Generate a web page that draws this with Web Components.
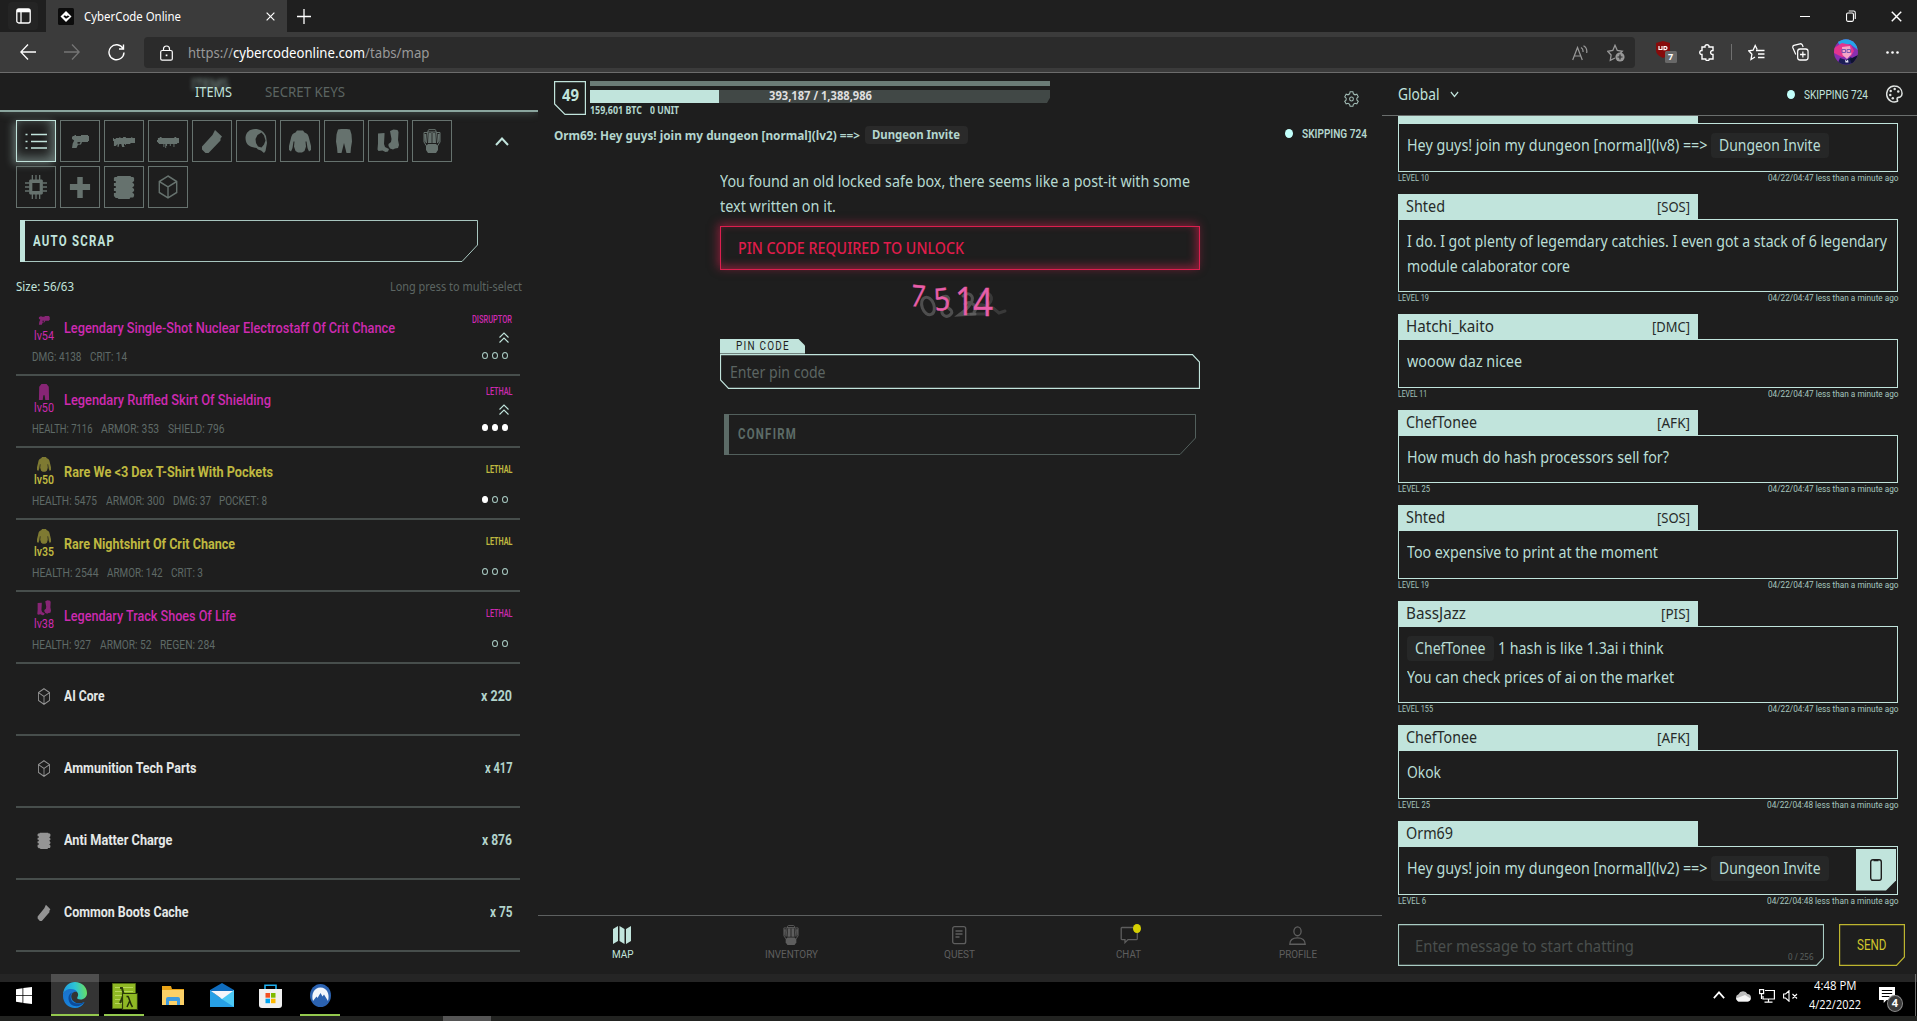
<!DOCTYPE html>
<html lang="en">
<head>
<meta charset="utf-8">
<title>CyberCode Online</title>
<style>
html,body{margin:0;padding:0;background:#1e1e1e;overflow:hidden}
body{width:1917px;height:1021px;font-family:"Noto Sans","Open Sans",sans-serif;font-size:16px;color:#c1e4dc}
</style>
</head>
<body>
<cyber-app></cyber-app>
<script>
const TECH = 'Roboto,"Liberation Sans",sans-serif';
const t = (text, w, cls = '') => `<fit-text w="${w}" class="${cls}">${text}</fit-text>`;
const ic = (name, w, h = w, style = '') => `<ui-icon name="${name}" w="${w}" h="${h}" style="${style}"></ui-icon>`;

const S = 'fill="none" stroke="currentColor"';
const ICONS = {
  list: ['0 0 22 18', `<g ${S} stroke-width="1.6"><path d="M6 2.5h16M6 9.5h16M6 16h16"/><path d="M.5 2.5h2M.5 9.5h2M.5 16h2"/></g>`],
  pistol: ['0 0 22 24', `<path fill="currentColor" fill-rule="evenodd" d="M4 7h1.500V6H7v1h5V6h7v1h1v5h-1v1h-6l-1 2.500-3 .3L7.500 19H3l.7-4.500 1.500-3L3 10V8zm4.500 6v1.800h2.200l.8-1.800z"/>`],
  rifle: ['0 0 24 24', `<path fill="currentColor" d="M0 9h1v1h2V9h4V8h1v1h3V8h3v1h6V8h1v1h3v5h-5v1h-5v1h-1v-1h-1v2l1 1h-3l-1-3h-2l-1 3H5v-3l-2 2H1v-5H0z"/>`],
  smg: ['0 0 24 24', `<path fill="currentColor" d="M1 9h2V8h2v1h14V8h2v1h3v5h-2v1h-3v3h-1v-3h-3v2h-1v-2h-3v2h-1v2h-1v-4H8v3H7v-3H2v-1H1v-1H0v-2h1z"/>`],
  clip: ['0 0 22 24', `<path fill="currentColor" d="M14 1l7 6.500-1.500 2v2L9 22.500 7.500 24H4.500L1 20.500v-3L11.500 6z"/>`],
  helmet: ['0 0 22 24', `<path fill="currentColor" fill-rule="evenodd" d="M10 0c5 0 9 2.500 11 7l1 7-1.500 8-1.500 2-3-2.500-3-1-1.500-1.500-4.500-1C3 17 .5 14 .5 8.500 1 3.500 4.500 0 10 0zm6.500 3.500l-4 2.500-2 4 .5 4 2 3.500 3.500 1 2.500-3 1.500-4-1.500-5z"/>`],
  shirt: ['0 0 22 24', `<path fill="currentColor" d="M8 1.500h6l1.500 2c2.500.5 4 2.500 4.500 5.500l2 8v4l-2 1.500-1.500-3.500-1-6.500h-1l.5 5-1.500 4.500L13 23.500H9L6.500 22 5 17.500l.500-5h-1l-1 6.500L2 22.500 0 21v-4l2-8c.5-3 2-5 4.500-5.500z"/>`],
  pants: ['0 0 22 24', `<path fill="currentColor" d="M5 .5Q11-.8 17 .5l1.500 5 .5 7-1 6-.5 5.500h-4l-1.500-6-1-4-1 4-1.500 6h-4L4 18.500l-1-6 .5-7z"/>`],
  skirt: ['0 0 22 24', `<path fill="currentColor" d="M7 0h8l3.500 4 .5 20h-6l-1-7h-2l-1 7H3l.5-20z"/>`],
  boots: ['0 0 22 24', `<path fill="currentColor" d="M1 4.500l6.500-.500v2L7 15l1 3 4 2-1 2.500-2.500.5-3-1.500-4 .5-1-1.500.5-6zM13 2l3.500-1.500 4 .5 1 2-.5 8 1 5-1 3-3 .5-2 1-3-1-1.500-2.500V15l2.500-2 .5-3z"/>`],
  pack: ['0 0 18 24', `<g ${S} stroke-width="1"><path d="M5 3V1.500L6 .6h6l1 .9V3M4.500 3L3.500 14M13.500 3l1 11M4 3.500H1V13l2.500 4M14 3.500h3V13l-2.500 4M4.500 3h9M9 3v11"/></g><g fill="currentColor"><path d="M5.500 4h2.700v10H5zM9.800 4h2.700l.5 10H9.800zM1.200 5h2l-.5 9-1.200-2zM14.800 5h2l-.3 7-1.200 2z"/><path d="M5 15h8l2 2v4l-2 3H5l-2-3v-4z"/></g>`],
  chip: ['0 0 24 24', `<path fill="currentColor" fill-rule="evenodd" d="M5.500 4.500h13l1 1v13l-1 1h-13l-1-1v-13zM8 8v8h8V8z"/><g ${S} stroke-width="1.400"><path d="M8 0v5M12 0v5M16 0v5M8 19v5M12 19v5M16 19v5M0 8h5M0 12h5M0 16h5M19 8h5M19 12h5M19 16h5"/></g>`],
  plus: ['0 0 24 24', `<path fill="currentColor" d="M9 2h6v7h8v6h-8v8H9v-8H1V9h8z"/>`],
  module: ['0 0 24 24', `<path fill="currentColor" d="M5 1h14l1 1h2l1 1v3l-2 1.500L23 9v2l-2 1.500 2 1.500v2l-2 1.500 2 1.500v2l-1 1.500h-3L18 24H6l-1-1H3l-2-2v-3h2v-2H1v-3h2v-2H1V8h2V6H1V3l1-1h2z"/>`],
  cube: ['0 0 24 24', `<g ${S} stroke-width="1.500"><path d="M12 1l9.500 5.500v11L12 23l-9.500-5.500v-11zM2.500 6.500L12 12l9.500-5.500M12 12v11"/></g>`],
  up: ['0 0 14 9', `<path ${S} stroke-width="2" d="M1 8l6-6.500L13 8"/>`],
  down: ['0 0 10 7', `<path ${S} stroke-width="1.300" d="M1 1l4 4.500L9 1"/>`],
  rank: ['0 0 10 11', `<path ${S} stroke-width="1.100" d="M.5 5.500L5 1l4.500 4.500M.5 10.500L5 6l4.500 4.500"/>`],
  gear: ['0 0 16 16', `<g ${S} stroke-width="1.100"><path d="M6.500.8h3l.5 2 1.700 1 2-.6 1.500 2.600-1.500 1.400v1.800l1.500 1.300-1.500 2.600-2-.6-1.700 1-.5 2h-3l-.5-2-1.700-1-2 .6L.8 10.300 2.300 9V7.200L.8 5.800l1.500-2.600 2 .6 1.700-1z"/><circle cx="8" cy="8" r="2"/></g>`],
  palette: ['0 0 18 18', `<path ${S} stroke-width="1.600" d="M9 1a8 8 0 1 0 3 15.300c1-.8-.7-1.800-.3-3 .4-1.300 1.800-.7 3.300-1.300 1.200-.5 2-1.600 2-3.500C16.800 4 13.500 1 9 1z"/><g fill="currentColor"><circle cx="5" cy="6" r="1.300"/><circle cx="4.500" cy="10" r="1.300"/><circle cx="7.200" cy="13.300" r="1.300"/><circle cx="9.200" cy="4" r="1.300"/><circle cx="13" cy="6.500" r="1.300"/></g>`],
  map: ['0 0 18 18', `<path fill="currentColor" d="M0 3l5-3v15l-5 3zM6.500 0l5 3v15l-5-3zM13 3l5-3v15l-5 3z"/>`],
  quest: ['0 0 15 19', `<g ${S}><rect x=".7" y=".7" width="13" height="17" rx="2" stroke-width="1.300"/><path stroke-width="1.300" d="M3.500 5h7M3.500 8h7M3.500 11h4"/></g>`],
  chat: ['0 0 18 18', `<path ${S} stroke-width="1.300" d="M2 1.500h14.500a.8.8 0 0 1 .8.800v10.500a.8.8 0 0 1-.8.800H8l-3 3v-3H2a.8.8 0 0 1-.8-.8V2.300a.8.800 0 0 1 .8-.8z"/>`],
  profile: ['0 0 17 18', `<g ${S} stroke-width="1.300"><ellipse cx="8.500" cy="5" rx="3.600" ry="4.200"/><path d="M.8 17.300c0-4 3-6 7.700-6s7.700 2 7.700 6z"/></g>`],
  phone: ['0 0 12 22', `<g ${S} stroke-width="1.400"><rect x=".7" y=".7" width="10.600" height="20.600" rx="2.200"/></g><path fill="currentColor" d="M3.500 0h5v2.200h-5z"/>`],
  sidebar: ['0 0 15 16', `<g ${S} stroke-width="1.300"><rect x=".8" y=".8" width="13.400" height="14.200" rx="2"/><path d="M5 4v11"/></g><path fill="currentColor" d="M1 1h13v3.300H1z"/>`],
  favicon: ['0 0 16 17', `<rect width="16" height="17" rx="1.500" fill="#0c0c0c"/><path fill="#fff" d="M8 3l5.500 5.500L8 14 2.500 8.500z"/><path fill="#0c0c0c" d="M6 7.500l4 0 1.500 1L8 10.800 5.500 8.500z"/><path fill="#fff" d="M6.500 6.500h3.500l-1.500 2z"/>`],
  x: ['0 0 10 10', `<path ${S} stroke-width="1.300" d="M.7.7l8.600 8.600M9.300.7L.7 9.300"/>`],
  add: ['0 0 14 15', `<path ${S} stroke-width="1.300" d="M7 0v15M0 7.500h14"/>`],
  back: ['0 0 16 16', `<path ${S} stroke-width="1.300" d="M16 8H1M8 .5L.8 8 8 15.500"/>`],
  fwd: ['0 0 16 16', `<path ${S} stroke-width="1.300" d="M0 8h15M8 .5L15.200 8 8 15.500"/>`],
  reload: ['0 0 17 17', `<path ${S} stroke-width="1.400" d="M15 4.500A7.500 7.500 0 1 0 16 8.500M15.500.5V5H11"/>`],
  lock: ['0 0 13 16', `<g ${S} stroke-width="1.200"><rect x=".7" y="5.500" width="11.600" height="9.700" rx="1.500"/><path d="M3.500 5.500V4a3 3 0 0 1 6 0v1.500"/></g><rect x="5.700" y="9.500" width="1.700" height="1.700" fill="currentColor"/>`],
  read: ['0 0 16 16', `<g ${S} stroke-width="1.200"><path d="M.7 15L5.500 2.500 10.300 15M2.300 11h6.400M9 2.500c1.700 1 2.300 2.500 2 4.500M11.500.8c2.800 1.500 3.700 4.200 3.200 7.200"/></g>`],
  starplus: ['0 0 18 18', `<path ${S} stroke-width="1.300" d="M8 14l-4.700 2.300.8-5.300L.8 7.300l5-.8L8 1.300l2.300 5.200 5 .8-2 2"/><circle cx="13" cy="13" r="4.600" fill="currentColor"/><path stroke="#2b2b2b" stroke-width="1.200" d="M13 10.500v5M10.500 13h5"/>`],
  puzzle: ['0 0 16 17', `<path ${S} stroke-width="1.400" d="M3 3h3c-.5-3 4.500-3 4 0h4v3.500c-3.200-.5-3.200 4.300 0 4V15h-3.700c.3 2-4 2-3.600 0H3v-4.500c-3 .3-3-4.300 0-4z"/>`],
  favs: ['0 0 17 17', `<path ${S} stroke-width="1.300" d="M7 13l-4 2.500.9-5.200L.8 6.800l4.300-.6L7.200 1.500l2 4M8 6.500h8.500M10 10h6.500M10 13.500h6.500"/>`],
  coll: ['0 0 18 18', `<g ${S} stroke-width="1.300"><rect x="6" y="6" width="11" height="11" rx="2.500"/><path d="M11.500 8.500v6M8.500 11.500h6M4 11.500L1 5c-.5-1.500 0-2.300 1-2.700L8.500.8c1.300-.2 2 .2 2.500 1.200l.8 2"/></g>`],
  ublock: ['0 0 21 22', `<path fill="#870b0b" d="M7 0l7 2v7c0 4-3 6-7 8-4-2-7-4-7-8V2z"/><path fill="none" stroke="#fff" stroke-width="1.200" d="M3 5v3.500h3V5M8 5.600h1.500c2 0 2 3 0 3H8z"/><rect x="9" y="10" width="12" height="12" rx="1.500" fill="#686868"/>`],
  avatar: ['0 0 24 26', `<defs><clipPath id="c"><ellipse cx="12" cy="13" rx="12" ry="12.800"/></clipPath></defs><g clip-path="url(#c)"><path fill="#8a2fb0" d="M0 0h24v26H0z"/><path fill="#25a5e8" d="M3 2l10-3 9 5 2 7-8-6-9 3z"/><path fill="#e2348f" d="M0 9l8-5 9 2 3 6-3 5-9 1-8-4z"/><path fill="#f5a5c8" d="M8 8l8-1 1.500 8-4.500 5-4.500-4z"/><path fill="none" stroke="#7a58b0" d="M8 10.500h3.500v3H8zM13 10.500h3.500v3H13z"/><path fill="#1c1e56" d="M3 26l3-7 6 2 5-3 6 8z"/><path fill="#0e1230" d="M16 20l8-4v10h-6z"/><path fill="#e8e4f4" d="M11 20.500l1.500 1.500 1.500-1.500.5 3h-3z"/></g>`],
  more: ['0 0 13 3', `<g fill="currentColor"><circle cx="1.500" cy="1.500" r="1.300"/><circle cx="6.500" cy="1.500" r="1.300"/><circle cx="11.500" cy="1.500" r="1.300"/></g>`],
  restore: ['0 0 11 12', `<g ${S} stroke-width="1.200"><rect x=".6" y="3" width="7.600" height="8.300" rx="1.500"/><path d="M3 1h5.500q1.700 0 1.700 1.700V9"/></g>`],
  windows: ['0 0 16 17', `<path fill="#fff" d="M0 2.200l6.500-1V8H0zM7.300 1L16 0v8H7.300zM0 8.800h6.500v7l-6.500-1zM7.300 8.800H16V17l-8.700-1z"/>`],
  edge: ['0 0 24 26', `<defs><linearGradient id="a" x1="0" y1=".4" x2="1" y2=".3"><stop stop-color="#1f9be0"/><stop offset=".5" stop-color="#2cc3d6"/><stop offset="1" stop-color="#6be05c"/></linearGradient><linearGradient id="b" x1="0" y1="0" x2=".6" y2="1"><stop stop-color="#1b6fc9"/><stop offset="1" stop-color="#1688e0"/></linearGradient></defs><path fill="url(#a)" d="M0 12C1 4 6 0 12 0c7 0 12 5 12 11 0 4-3 6.500-6.500 6.500-3 0-4-1.200-3-2.500 2-3-.5-7-5-7C5 8 1.500 9.500 0 12z"/><path fill="url(#b)" d="M0 12c1-3 4-5 8-5 3 0 5 1.300 6 3-3.500-1-6.500 2-5.500 6 1 4.500 7 7 13 4-2 4-5.500 6-9.500 6C5 26 0 20.500 0 14z"/><path fill="#0c4c9c" d="M9.500 10.500c-2 1.500-2.500 4-1.500 7 1.500 4 7 5.500 13.500 2.500-4 6-15 6-16-3-.3-3 1.300-6 4-6.500z"/>`],
  lambda: ['0 0 26 27', `<path fill="#8fb824" stroke="#4e6a12" d="M.5.5h23v25H.5z"/><path stroke="#b7d65c" d="M3 4.500h18M3 8.500h18M3 12.500h18M3 16.500h18M3 20.500h18"/><path fill="none" stroke="#2c3a0a" stroke-width="2" d="M8 5h2l4 15M12 11l-4 9"/><path fill="#8fb824" stroke="#2c3a0a" stroke-width="1.200" d="M10.500 10.500h15v16h-15z"/><path fill="none" stroke="#222d08" stroke-width="1.500" d="M14.500 13.500h1.500c1.500 2 2 7 4.500 10.500M17.700 18L15 24"/>`],
  folder: ['0 0 22 20', `<path fill="#e8a317" d="M0 0h9l1 3h12v4H0z"/><path fill="#fbd067" d="M0 4h22v15H0z"/><path fill="#3d9be0" d="M4 19v-6q0-2 2-2h10q2 0 2 2v6h-3v-4H7v4z"/>`],
  mail: ['0 0 24 24', `<path fill="#0f6cbd" d="M0 7l12-7 12 7v3H0z"/><path fill="#27a0e6" d="M0 7v17h24V7L12 16z"/><path fill="#4cc9f5" d="M24 24V7L10 15z"/><path fill="#f4f6fa" d="M1 8h22l-11 8z"/>`],
  store: ['0 0 23 24', `<path fill="none" stroke="#1fb0ef" stroke-width="1.600" d="M6 6V1.200h11V6"/><path fill="#f0f0f0" d="M0 5h23v16q0 3-3 3H3q-3 0-3-3z"/><path fill="#f25022" d="M6.500 9h4.500v4.700H6.500z"/><path fill="#7fba00" d="M12 9h4.500v4.700H12z"/><path fill="#00a4ef" d="M6.500 14.700h4.500v4.500H6.500z"/><path fill="#ffb900" d="M12 14.700h4.500v4.500H12z"/>`],
  nord: ['0 0 21 23', `<ellipse cx="10.500" cy="11.500" rx="10.500" ry="11.500" fill="#2b62b0"/><path fill="#f2f6fc" d="M3 17C1 10 4 3.500 10.500 3.500S20 10 18 17l-4-6.500-1.500 2-2-3.500-3 5-1-1.500z"/>`],
  cloud: ['0 0 16 12', `<path fill="#bdbdbd" d="M4 11.500a3.800 3.800 0 0 1-.5-7.300A5 5 0 0 1 12.500 4a3.800 3.800 0 0 1 .5 7.500z"/><path fill="#f6f6f6" d="M3 11.500L1 8.500 10 5l5.500 3.500q-.5 3-3 3z"/>`],
  net: ['0 0 16 14', `<g fill="none" stroke="#fff" stroke-width="1.200"><path d="M6 1.500h9.400v8.500H4V7M9.500 10v3M5.500 13.200h8"/><rect x=".6" y=".6" width="4" height="4"/><path d="M2.500 5v5"/></g>`],
  mute: ['0 0 15 12', `<g fill="none" stroke="#fff" stroke-width="1.100"><path d="M.6 4h2L6 .8v10.400L2.600 8h-2zM9.500 4l4.500 4.500M14 4L9.500 8.500"/></g>`],
  note: ['0 0 17 16', `<path fill="#fff" d="M0 0h17v13H8l-3 3v-3H0z"/><path stroke="#000" stroke-width="1.200" d="M3 3.500h11M3 6.500h11M3 9.500h8"/>`]
};

class UiIcon extends HTMLElement {
  connectedCallback() {
    const [vb, body] = ICONS[this.getAttribute('name')];
    const w = this.getAttribute('w'), h = this.getAttribute('h');
    this.attachShadow({mode: 'open'}).innerHTML =
      `<style>:host{display:block;flex:none;width:${w}px;height:${h}px}svg{display:block}</style>
       <svg width="${w}" height="${h}" viewBox="${vb}" preserveAspectRatio="none">${body}</svg>`;
  }
}

/* One line of text, set to an exact advance width. */
class FitText extends HTMLElement {
  connectedCallback() {
    const w = +this.getAttribute('w');
    this.attachShadow({mode: 'open'}).innerHTML =
      `<style>:host{display:block;flex:none;width:${w}px;white-space:pre}span{display:inline-block;transform-origin:0 50%}</style><span><slot></slot></span>`;
    const s = this.shadowRoot.querySelector('span');
    const n = s.getBoundingClientRect().width;
    if (n) s.style.transform = `scaleX(${w / n})`;
  }
}

const define = (name, html) => customElements.define(name, class extends HTMLElement {
  connectedCallback() {
    this.attachShadow({mode: 'open'}).innerHTML = typeof html === 'function' ? html(this) : html;
  }
});

define('cyber-app', `
<style>:host{display:flex;flex-direction:column;width:1917px;height:1021px}main{display:flex;height:901px;flex:none}
footer{height:5px;background:#222321;padding-left:443px}footer i{display:block;width:48px;height:5px;background:#555}</style>
<browser-chrome></browser-chrome>
<main><inventory-panel></inventory-panel><map-panel></map-panel><chat-panel></chat-panel></main>
<task-bar></task-bar><footer><i></i></footer>`);

define('browser-chrome', `
<style>
:host{display:block;height:72px;border-bottom:1px solid #6c6c6c;background:#3b3b3b;font-family:"Noto Sans",sans-serif;color:#fff}
.r{display:flex;align-items:center}
.tabs{height:32px;background:#1f1f1f;font-size:13px}
.side{width:30px;height:28px;margin:0 8px;background:#242424;justify-content:center;border-radius:4px}
.side ui-icon{margin-left:1px}
.tab{width:241px;height:32px;background:#3b3b3b;box-sizing:border-box;padding-left:12px}
.ttl{margin:-1px 0 0 10px}
.bar{height:40px}
.url{width:1491px;height:31px;margin-left:19px;background:#2b2b2b;border-radius:4px;font-size:14px;color:#999;box-sizing:border-box;padding-left:16px;margin-top:1px}
.u{margin-left:15.500px}.b{color:#fff}
.ub{position:relative;margin-left:21px}
.n{position:absolute;left:12px;top:10px;font:700 9px/12px "Noto Sans"}
</style>
<div class="r tabs"><div class="r side">${ic('sidebar',15,16)}</div><div class="r tab">${ic('favicon',16,17)}${t('CyberCode Online',97,'ttl')}${ic('x',9,9,'margin-left:85px')}</div>${ic('add',14,15,'margin-left:10px')}
<i style="margin-left:1489px;width:10px;height:1px;background:#fff"></i>${ic('restore',10,12,'margin-left:36px')}${ic('x',11,11,'margin-left:35px')}</div>
<div class="r bar">${ic('back',16,16,'margin-left:20px')}${ic('fwd',16,16,'margin-left:28px;color:#757575')}${ic('reload',17,17,'margin-left:28px')}
<div class="r url">${ic('lock',13,16,'color:#fff;margin-left:-.5px')}${t('https://',45,'u')}${t('cybercodeonline.com',132,'b')}${t('/tabs/map',64.5)}${ic('read',16,16,'margin-left:1142px')}${ic('starplus',18,18,'margin-left:19px')}</div>
<div class="ub">${ic('ublock',21,22)}<div class="n">7</div></div>${ic('puzzle',16,17,'margin-left:22px')}<i style="width:1px;height:16px;background:#707070;margin-left:16px"></i>${ic('favs',17,17,'margin-left:16px')}${ic('coll',17,18,'margin-left:27px')}${ic('avatar',24,26,'margin-left:25px')}${ic('more',13,3,'margin-left:28px')}</div>`);

define('cut-button', el => {
  const w = +el.getAttribute('w'), h = +el.getAttribute('h');
  return `<style>:host{display:grid;width:${w}px;height:${h}px;align-items:center}:host>*,svg{grid-area:1/1}svg{display:block}
  div{padding-left:${el.getAttribute('pad')}px;font:700 14px/20px ${TECH};letter-spacing:1.500px}</style>
  <svg width="${w}" height="${h}"><path fill="none" stroke="currentColor" stroke-opacity=".85" d="M.5 .5H${w - .5}V${h - 17}L${w - 16} ${h - .5}H.5z"/><path fill="currentColor" d="M0 0h5v${h}H0z"/></svg><div><slot></slot></div>`;
});

define('filter-cell', el => `
<style>:host{display:flex;align-items:center;justify-content:center;width:40px;height:42px;box-sizing:border-box;border:1px solid #66726e;color:#66726e}
:host([on]){border-color:#c1e4dc;color:#c1e4dc;box-shadow:-3px 2px 8px #c1e4dc66,inset -3px -3px 12px #c1e4dc77}</style>
${el.getAttribute('icon') === 'list' ? ic('list',22,18) : el.getAttribute('icon') === 'pack' ? ic('pack',18,24) : ic(el.getAttribute('icon'),22,24)}`);

define('gear-row', el => {
  const a = n => el.getAttribute(n);
  const rare = el.hasAttribute('rare'), rank = el.hasAttribute('rank');
  const stats = a('stats').split('|').map(s => s.split('~')).map(([s, w]) => t(s, w)).join('');
  return `<style>
  :host{display:flex;height:70px;width:504px;border-bottom:2px solid #474e4c;color:${rare ? '#bfb840' : '#cd2ab0'};font-family:${TECH};font-weight:${rare ? 700 : 500}}
  .l{flex:1;padding:8px 0 0 16px}.top{display:flex;align-items:center;height:32px}
  .ic{width:24px;display:flex;flex-direction:column;align-items:center;font-size:13px;line-height:16px;margin-right:8px;font-weight:${rare ? 600 : 400}}
  ui-icon{opacity:.6}.nm{font-size:14.500px;line-height:18px;margin-top:2px}
  .st{display:flex;gap:8.500px;margin-top:5px;font-size:12px;line-height:16px;color:#5f6a67;font-weight:400}
  .r{width:60px;display:flex;flex-direction:column;align-items:flex-end;padding-right:8px}
  .tier{font-size:10px;line-height:12px;margin-top:${rank ? 10 : 16}px;height:12px}
  .rk{height:11px;margin:${rank ? 6 : 1}px 3px ${rank ? 9 : 8}px 0;color:#c1e4dc}.rk ui-icon{opacity:1}
  .dots{display:flex;gap:4px;margin-right:4px}.dots i{width:6px;height:7px;box-sizing:border-box;border:1.500px solid #a9cbc3;border-radius:50%}.dots i.f{background:#fff;border-color:#fff}
  </style>
  <div class="l"><div class="top"><div class="ic">${ic(a('icon'),14,16)}${t(a('lv'),20)}</div>${t(a('name'),a('w'),'nm')}</div><div class="st">${stats}</div></div>
  <div class="r">${t(a('tier'),a('tw'),'tier')}<div class="rk">${rank ? ic('rank',10,11) : ''}</div><div class="dots">${[...a('dots')].map(c => `<i class="${c === '1' ? 'f' : ''}"></i>`).join('')}</div></div>`;
});

define('stack-row', el => {
  const a = n => el.getAttribute(n);
  return `<style>:host{display:flex;align-items:center;width:504px;height:70px;box-sizing:content-box;border-bottom:2px solid #474e4c;font:700 14.500px/18px ${TECH};color:#e4e8e7}
  ui-icon{margin:0 13px 5px 21px;color:#949494}.n{margin-bottom:4px}.c{margin:0 8px 4px auto;color:#b2d3cb}</style>
  ${ic(a('icon'),14,17)}${t(a('name'),a('w'),'n')}${t(a('count'),a('cw'),'c')}`;
});

define('inventory-panel', `
<style>
:host{display:flex;flex-direction:column;width:538px;height:901px;flex:none;overflow:hidden}
nav{display:flex;height:37px;border-bottom:2px solid #8aa59e;box-shadow:0 0 9px #8aa59e66;padding-left:194.500px;line-height:37px;font-size:15px}
.on{text-shadow:-4px -8px 5px #c1e4dcaa}.off{margin-left:33px;color:#5c6562}
.f{display:flex;padding:8px 0 0 16px;height:88px}.g{display:flex;flex-wrap:wrap;gap:4px;width:440px;align-content:flex-start}
.f ui-icon{margin:17px 0 0 39px}
cut-button{margin:12px 0 0 20px}
.s{display:flex;justify-content:space-between;padding:9px 16px 0 16px;height:33px;line-height:30px;font-size:13px}.h{color:#5c6562}
.rows{padding-left:16px}
</style>
<nav>${t('ITEMS',37,'on')}${t('SECRET KEYS',80,'off')}</nav>
<div class="f"><div class="g">${['list','pistol','rifle','smg','clip','helmet','shirt','pants','boots','pack','chip','plus','module','cube'].map((n,i)=>`<filter-cell icon="${n}" ${i?'':'on'}></filter-cell>`).join('')}</div>${ic('up',14,9)}</div>
<cut-button w="458" h="42" pad="13">${t('AUTO SCRAP',82)}</cut-button>
<div class="s">${t('Size: 56/63',58)}${t('Long press to multi-select',132,'h')}</div>
<div class="rows">
<gear-row icon="pistol" lv="lv54" name="Legendary Single-Shot Nuclear Electrostaff Of Crit Chance" w="331" tier="DISRUPTOR" tw="40" rank dots="000" stats="DMG: 4138~49.5|CRIT: 14~37"></gear-row>
<gear-row icon="skirt" lv="lv50" name="Legendary Ruffled Skirt Of Shielding" w="207" tier="LETHAL" tw="26.500" rank dots="111" stats="HEALTH: 7116~60.5|ARMOR: 353~58|SHIELD: 796~56.5"></gear-row>
<gear-row rare icon="shirt" lv="lv50" name="Rare We &lt;3 Dex T-Shirt With Pockets" w="209" tier="LETHAL" tw="26.500" dots="100" stats="HEALTH: 5475~65|ARMOR: 300~58.5|DMG: 37~38|POCKET: 8~48"></gear-row>
<gear-row rare icon="shirt" lv="lv35" name="Rare Nightshirt Of Crit Chance" w="171" tier="LETHAL" tw="26.500" dots="000" stats="HEALTH: 2544~66.5|ARMOR: 142~55.5|CRIT: 3~32"></gear-row>
<gear-row icon="boots" lv="lv38" name="Legendary Track Shoes Of Life" w="172" tier="LETHAL" tw="26.500" dots="00" stats="HEALTH: 927~59|ARMOR: 52~51.5|REGEN: 284~55"></gear-row>
<stack-row icon="cube" name="AI Core" w="40.500" count="x 220" cw="31"></stack-row>
<stack-row icon="cube" name="Ammunition Tech Parts" w="132.500" count="x 417" cw="27.500"></stack-row>
<stack-row icon="module" name="Anti Matter Charge" w="108.500" count="x 876" cw="30"></stack-row>
<stack-row icon="clip" name="Common Boots Cache" w="124.500" count="x 75" cw="22.500"></stack-row>
</div>`);

define('skip-status', el => `
<style>:host{display:flex;align-items:center;font:${el.getAttribute('wt')} 12.500px/16px ${TECH}}i{width:8px;height:9px;border-radius:50%;background:#c2fffb;margin-right:9px}</style>
<i></i>${t('SKIPPING 724', el.getAttribute('w'))}`);

define('nav-item', el => `
<style>:host{flex:1;display:flex;flex-direction:column;align-items:center;height:58px;padding-top:9px;box-sizing:border-box;font:400 11.500px/14px ${TECH};color:#5e5e5e}
:host([on]){color:#c1e4dc}.i{height:20px;display:flex;align-items:center;margin-bottom:2px;position:relative}
.dot{position:absolute;right:-3px;top:-1px;width:8px;height:9px;border-radius:50%;background:#d6d002}</style>
<div class="i">${ic(el.getAttribute('icon'), el.getAttribute('iw'), el.getAttribute('ih'))}${el.hasAttribute('dot') ? '<div class="dot"></div>' : ''}</div>${t(el.getAttribute('label'), el.getAttribute('w'))}`);

define('pin-picture', `
<style>:host{display:block;width:120px;height:40px}svg{display:block;overflow:visible}</style>
<svg width="120" height="40" font-family="Open Sans, sans-serif">
<g fill="none" stroke="#8a8a8a" stroke-linecap="round">
<g opacity=".45" stroke-width="3"><ellipse cx="27" cy="22" rx="6" ry="9" transform="rotate(-20 27 22)"/><path d="M40 14c6-4 10 0 6 5s8 6 4 11-10 1-9-4"/><path d="M62 12c6-5 12 0 8 7s-8 9-12 12l16-1M64 20c6-4 14 3 9 8"/></g>
<g opacity=".25" stroke-width="3"><path d="M80 10c8-4 14 4 8 10M76 22c6-4 14 2 8 8h-14M92 24l6 5 6-2"/></g></g>
<g fill="#e85ea9" stroke="#e85ea9" stroke-width=".4"><text x="10" y="23" font-size="30" textLength="14" lengthAdjust="spacingAndGlyphs" transform="rotate(6 18 14)">7</text>
<text x="33" y="26" font-size="31" textLength="16" lengthAdjust="spacingAndGlyphs" transform="rotate(-6 42 16)">5</text>
<text x="54" y="31" font-size="39" textLength="19" lengthAdjust="spacingAndGlyphs">1</text>
<text x="72" y="32" font-size="38" textLength="20" lengthAdjust="spacingAndGlyphs">4</text></g></svg>`);

define('map-panel', `
<style>
:host{display:flex;flex-direction:column;width:844px;height:901px;flex:none}
.head{display:flex;height:42px;padding:8px 0 0 16px;box-sizing:content-box}
.lv{display:grid;place-items:center;width:32px;height:34px;font-weight:700;font-size:16px}.lv>*{grid-area:1/1}.lv svg{display:block}.lv fit-text{margin-top:-7px}
.bars{width:460px;margin-left:4px}.thin{height:5px;background:#6b7c77}
.thick{display:grid;align-items:center;margin-top:4px;height:13px;background:#414846;clip-path:polygon(0 0,100% 0,100% 60%,457px 100%,0 100%);font-size:12px;font-weight:700;line-height:13px;color:#dedede}.thick>*{grid-area:1/1}
.fill{width:129px;height:13px;background:#c1e4dc}.num{margin:-2px 0 0 179px}
.btc{display:flex;gap:8px;font-size:10.500px;font-weight:700;line-height:14px;color:#b4d6ce}
.say{display:flex;align-items:center;height:18px;margin-top:3px;padding-left:16px;font-size:13px;line-height:17px;font-weight:700;color:#b4d6ce}
.pill{background:#2a2a2a;border-radius:4px;padding:0 8px 0 7.500px;height:18px;margin-left:4.500px}
skip-status{margin:-3px 0 0 316.500px}
.body{flex:1;padding:25px 0 0 182px}.tx{font-size:16px;line-height:25px;color:#b6d9d1;margin:-.500px 0 .500px}
.err{width:480px;height:44px;box-sizing:border-box;border:1px solid #dc1f4f;box-shadow:-2px -2px 9px #dc1f4f88,inset -3px -3px 9px #dc1f4f88;margin-top:7px;padding-left:16.500px;font-size:16px;line-height:43px;color:#e01c4b;font-weight:500}
pin-picture{margin:14px 0 0 181px}
.lab{width:85px;height:15px;background:#c1e4dc;color:#1e1e1e;clip-path:polygon(0 0,78px 0,100% 7px,100% 100%,0 100%);margin-top:15px;padding-left:16px;box-sizing:border-box;font:400 12px/15px ${TECH};letter-spacing:1.500px}
.in{display:grid;align-items:center;width:480px;height:35px;color:#5c6562}.in>*{grid-area:1/1}.in svg{display:block}.in fit-text{margin:1px 0 0 10px}
cut-button{margin:25px 0 0 4px;color:#5c6b67}
nav{display:flex;height:58px;border-top:1px solid #5d6060}
</style>
<div class="head"><div class="lv"><svg width="32" height="34"><path fill="none" stroke="#c1e4dc" stroke-width="1.200" d="M.6 .6H31.400V33.400H11L.6 23z"/></svg>${t('49',17)}</div>
<div class="bars"><div class="thin"></div><div class="thick"><div class="fill"></div>${t('393,187 / 1,388,986',103,'num')}</div><div class="btc">${t('159,601 BTC',52)}${t('0 UNIT',29)}</div></div>${ic('gear',15,16,'margin:10px 0 0 293.5px;color:#a3bdb6')}</div>
<div class="say">${t('Orm69: Hey guys! join my dungeon [normal](lv2) ==&gt;',306)}<div class="pill">${t('Dungeon Invite',88)}</div><skip-status wt="600" w="65"></skip-status></div>
<div class="body"><div class="tx">${t('You found an old locked safe box, there seems like a post-it with some',470)}${t('text written on it.',116)}</div>
<div class="err">${t('PIN CODE REQUIRED TO UNLOCK',226)}</div>
<pin-picture></pin-picture>
<div class="lab">${t('PIN CODE',54)}</div>
<div class="in"><svg width="480" height="35"><path fill="none" stroke="#c1e4dc" stroke-width="1.200" d="M.5 .6H472.500L479.500 8V34.400H8.500L.5 26z"/></svg>${t('Enter pin code',95.5)}</div>
<cut-button w="472" h="41" pad="14">${t('CONFIRM',59)}</cut-button></div>
<nav><nav-item on icon="map" iw="18" ih="18" label="MAP" w="21.500"></nav-item><nav-item icon="pack" iw="16" ih="20" label="INVENTORY" w="53"></nav-item><nav-item icon="quest" iw="15" ih="19" label="QUEST" w="31"></nav-item><nav-item dot icon="chat" iw="18" ih="18" label="CHAT" w="25"></nav-item><nav-item icon="profile" iw="17" ih="19" label="PROFILE" w="38"></nav-item></nav>`);

define('chat-message', el => {
  const a = n => el.getAttribute(n);
  return `<style>
  :host{display:block;width:500px;flex:none}
  header{display:flex;justify-content:space-between;align-items:center;width:300px;height:25px;box-sizing:border-box;padding:0 8.500px 0 8px;background:#c1e4dc;color:#262a29;font-size:15.500px;line-height:25px}
  .tag{font-size:14px}
  .box{border:1px solid #c1e4dc;height:${a('h')}px;box-sizing:border-box;padding:9px 0 0 8px;font-size:16px;line-height:25px;color:#b9ddd5}
  footer{display:flex;justify-content:space-between;height:22px;font:400 9.500px/11px ${TECH};color:#a6c6be}
  </style>
  <header>${t(a('from'), a('fw'))}${a('tag') ? t(a('tag'), a('tw'), 'tag') : ''}</header><div class="box"><slot></slot></div>
  <footer>${t('LEVEL ' + a('lv'), a('lw'))}${t('04/22/04:' + a('min') + ' less than a minute ago', a('min') === '48' ? 131.5 : 130.5)}</footer>`;
});

define('chat-panel', `
<style>
:host{display:flex;flex-direction:column;width:535px;height:901px;flex:none}
.top{display:flex;align-items:center;height:42px;border-bottom:1px solid #6a6e6d;padding-left:16px;font-size:16px}
skip-status{margin:1px 0 0 328px}
.list{height:793px;overflow:hidden;padding-left:16px}.w{margin-top:-18px}
.line{display:flex;align-items:center;height:25px}.pill{background:#262727;border-radius:4px;padding:0 8px 0 8.500px;margin-left:3px}
.tall .pill{margin:0 4px 0 0;padding-left:8px}.tall{margin-bottom:4px}
.phone{position:relative;width:0;height:0;top:-20px;left:27.500px}.phone div{width:40px;height:42px;background:#c1e4dc;color:#1e1e1e;clip-path:polygon(0 0,100% 0,100% 32px,30px 100%,0 100%);display:flex;align-items:center;justify-content:center}
.send{display:flex;padding:15px 0 0 16px}
.in{display:grid;width:426px;height:42px}.in>*{grid-area:1/1;align-self:center}.in svg{display:block}
.ph{margin:1px 0 0 17px;color:#4a4f4d;font-size:16px}.ct{margin:22px 0 0 389.500px;color:#5a605e;font-size:9px}
.btn{display:grid;place-items:center;width:66px;height:42px;margin-left:15px;color:#cfc52c;font:400 14px/20px ${TECH}}.btn>*{grid-area:1/1}.btn svg{display:block}
</style>
<div class="top">${t('Global',41.5)}${ic('down',9,7,'margin-left:10px')}<skip-status wt="400" w="64"></skip-status>${ic('palette',17,18,'margin-left:18px;color:#dfe3e1')}</div>
<div class="list"><div class="w">
<chat-message from="DiaBurdasonic" fw="88" lv="10" lw="31" min="47" h="49"><div class="line">${t('Hey guys! join my dungeon [normal](lv8) ==&gt;',300.5)}<div class="pill">${t('Dungeon Invite',101.5)}</div></div></chat-message>
<chat-message from="Shted" fw="39" tag="[SOS]" tw="33" lv="19" lw="31" min="47" h="73">${t('I do. I got plenty of legemdary catchies. I even got a stack of 6 legendary',480)}${t('module calaborator core',163)}</chat-message>
<chat-message from="Hatchi_kaito" fw="88" tag="[DMC]" tw="38" lv="11" lw="29" min="47" h="49">${t('wooow daz nicee',115)}</chat-message>
<chat-message from="ChefTonee" fw="71" tag="[AFK]" tw="33" lv="25" lw="32" min="47" h="48">${t('How much do hash processors sell for?',262)}</chat-message>
<chat-message from="Shted" fw="39" tag="[SOS]" tw="33" lv="19" lw="31" min="47" h="49">${t('Too expensive to print at the moment',251)}</chat-message>
<chat-message from="BassJazz" fw="60" tag="[PIS]" tw="29" lv="155" lw="35" min="47" h="77"><div class="line tall"><div class="pill">${t('ChefTonee',70.5)}</div>${t('1 hash is like 1.3ai i think',165.5)}</div>${t('You can check prices of ai on the market',267)}</chat-message>
<chat-message from="ChefTonee" fw="71" tag="[AFK]" tw="33" lv="25" lw="32" min="48" h="49">${t('Okok',34)}</chat-message>
<chat-message from="Orm69" fw="47" lv="6" lw="28" min="48" h="49"><div class="line">${t('Hey guys! join my dungeon [normal](lv2) ==&gt;',300.5)}<div class="pill">${t('Dungeon Invite',101.5)}</div><div class="phone"><div>${ic('phone',12,22)}</div></div></div></chat-message>
</div></div>
<div class="send"><div class="in"><svg width="426" height="42"><path fill="none" stroke="#a9cbc3" stroke-width="1.100" d="M.5 .6H425.500V34L418.500 41.400H.5z"/></svg>${t('Enter message to start chatting',219,'ph')}${t('0 / 256',25.5,'ct')}</div>
<div class="btn"><svg width="66" height="42"><path fill="none" stroke="#bdb52f" stroke-width="1.200" d="M.6 .6H65.400V33L57.500 41.400H.6z"/></svg>${t('SEND',29.5)}</div></div>`);

define('task-bar', `
<style>
:host{display:flex;height:42px;flex:none;background:linear-gradient(#252525 8px,#000 8px);color:#fff;font:400 12px/19px "Open Sans",sans-serif}
.a{display:flex;justify-content:center;align-items:flex-start;height:42px;box-sizing:border-box}
.e{width:48px;margin-left:19px;background:linear-gradient(#4f4f4f 8px,#343434 8px)}
.u{border-bottom:2px solid #94c94e}
.clock{width:60px;display:flex;flex-direction:column;align-items:center;margin:2px 0 0 7px}
.note{position:relative;margin:13px 0 0 14px}.bd{position:absolute;left:8px;top:8px;width:16px;height:17px;box-sizing:border-box;border:1.500px solid #8a8a8a;border-radius:50%;background:#3b3b3b;font:700 11px/14px "Noto Sans";text-align:center}
.end{margin-left:auto;width:1px;height:42px;background:#6a6a6a;margin-right:1px}
</style>
<div class="a">${ic('windows',16,17,'margin:13px 0 0 16px')}</div>
<div class="a e u">${ic('edge',24,26,'margin-top:8px')}</div>
<div class="a u" style="width:40px;margin-left:5px">${ic('lambda',26,27,'margin:9px 0 0 2px')}</div>
<div class="a" style="margin-left:18px">${ic('folder',22,20,'margin-top:12px')}</div>
<div class="a" style="margin-left:26px">${ic('mail',24,24,'margin-top:9px')}</div>
<div class="a" style="margin-left:25px">${ic('store',23,24,'margin-top:10px')}</div>
<div class="a u" style="width:40px;margin-left:18px">${ic('nord',21,23,'margin-top:10px')}</div>
${ic('up',12,8,'margin:17px 0 0 1373px')}${ic('cloud',16,12,'margin:16px 0 0 10px')}${ic('net',16,14,'margin:15px 0 0 8px')}${ic('mute',15,12,'margin:16px 0 0 8px')}
<div class="clock">${t('4:48 PM',42.5)}${t('4/22/2022',52)}</div>
<div class="note">${ic('note',16,16)}<div class="bd">4</div></div><i class="end"></i>`);

customElements.define('ui-icon', UiIcon);
customElements.define('fit-text', FitText);
</script>
</body>
</html>
